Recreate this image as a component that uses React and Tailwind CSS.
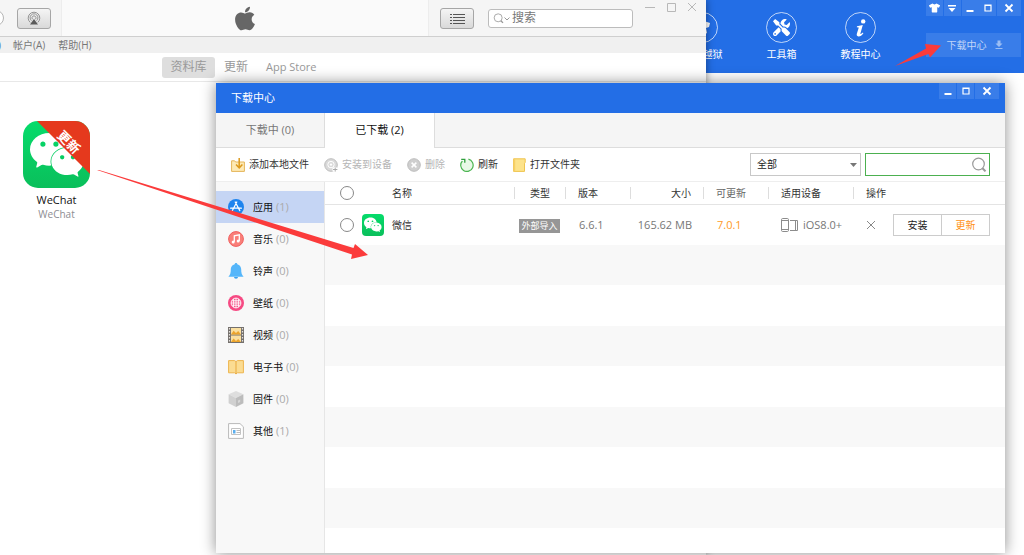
import React from 'react';
import { FaApple, FaTools, FaTshirt } from 'react-icons/fa';
import { MdDownload } from 'react-icons/md';
import { SiWechat } from 'react-icons/si';

const MinimizeIcon = () => (
  <svg width="10" height="10" viewBox="0 0 10 10" aria-hidden="true">
    <path d="M1.5 8h7" stroke="currentColor" strokeWidth="2" />
  </svg>
);

const MaximizeIcon = () => (
  <svg width="10" height="10" viewBox="0 0 10 10" fill="none" aria-hidden="true">
    <path d="M2 2h6v6H2zM2 2.5h6" stroke="currentColor" strokeWidth="1.2" />
  </svg>
);

const CloseIcon = () => (
  <svg width="10" height="10" viewBox="0 0 10 10" fill="none" aria-hidden="true">
    <path d="M1.5 1.5l7 7M8.5 1.5l-7 7" stroke="currentColor" strokeWidth="1.8" />
  </svg>
);

const MenuDownIcon = () => (
  <svg width="10" height="10" viewBox="0 0 10 10" aria-hidden="true">
    <path d="M1 2h8v1.4H1zM1.5 5h7L5 9z" fill="currentColor" />
  </svg>
);

const MagnifierIcon = ({ className }) => (
  <svg className={className} viewBox="0 0 16 16" fill="none" stroke="currentColor" aria-hidden="true">
    <circle cx="7.5" cy="7" r="5.8" strokeWidth="1.2" />
    <path d="M11.5 11.2l3 3.2" strokeWidth="2" />
  </svg>
);

// Small square button in the blue title bars
const WindowButton = ({ label, wide, children }) => (
  <button
    type="button"
    aria-label={label}
    className={`flex h-4 items-center justify-center bg-white/10 text-white ${wide ? 'w-6' : 'w-[17px]'}`}
  >
    {children}
  </button>
);

const AirplayIcon = () => (
  <svg width="14" height="14" viewBox="0 0 14 14" fill="none" aria-hidden="true">
    <g stroke="#8a8a8a" strokeWidth="0.9">
      <path d="M3.2 11.4a5.8 5.8 0 1 1 7.6 0" />
      <path d="M4.4 9.6a3.9 3.9 0 1 1 5.2 0" />
      <path d="M5.5 8.2a2 2 0 1 1 3 0" />
    </g>
    <path d="M7 8l4 5.5H3z" fill="#5a5a5a" />
  </svg>
);

const ListIcon = () => (
  <svg width="15" height="11" viewBox="0 0 15 11" aria-hidden="true">
    <path
      d="M0 1h2v1H0zM3 1h12v1H3zM0 4h2v1H0zM3 4h12v1H3zM0 7h2v1H0zM3 7h12v1H3zM0 10h2v1H0zM3 10h12v1H3z"
      fill="#555"
    />
  </svg>
);

/* Toolbar icons */

const ImportIcon = () => (
  <svg width="14" height="14" viewBox="0 0 14 14" fill="none" aria-hidden="true">
    <path d="M.6 2.8h3l1 1.2h8.8v9.4H.6z" fill="#fdeab6" stroke="#e5b559" />
    <path d="M8.2 0v9M5 6.4l3.2 3.4 3.2-3.4" stroke="#dd9a1d" strokeWidth="1.5" />
  </svg>
);

const InstallIcon = () => (
  <svg width="14" height="14" viewBox="0 0 14 14" fill="none" aria-hidden="true">
    <circle cx="7" cy="7" r="6.3" fill="#d9d9d9" stroke="#bdbdbd" />
    <circle cx="7" cy="6.6" r="3.2" stroke="#fff" />
    <circle cx="7" cy="6.6" r="1.2" fill="#fff" />
    <path d="M8.5 11.5h5M11 9v5" stroke="#fff" strokeWidth="3" />
    <path d="M9 11.5h4.4M11.2 9.4v4.2" stroke="#aaa" />
  </svg>
);

const DeleteIcon = () => (
  <svg width="14" height="14" viewBox="0 0 14 14" fill="none" aria-hidden="true">
    <circle cx="7" cy="7" r="6.3" fill="#cfcfcf" stroke="#bdbdbd" />
    <path d="M4.6 4.6l4.8 4.8M9.4 4.6L4.6 9.4" stroke="#fff" strokeWidth="1.5" />
  </svg>
);

const RefreshIcon = () => (
  <svg width="14" height="14" viewBox="0 0 14 14" fill="none" aria-hidden="true">
    <circle cx="7" cy="7.4" r="6" fill="#e9f9e7" />
    <path d="M8.4 1.2A6.2 6.2 0 1 1 2.4 3" stroke="#4cb552" strokeWidth="1.2" />
    <path d="M1.2 1.4h3.6v3.4" stroke="#2f9e3c" strokeWidth="1.3" />
  </svg>
);

const FolderIcon = () => (
  <svg width="13" height="14" viewBox="0 0 13 14" aria-hidden="true">
    <path d="M.6.8h11.6v3.6l-.7.8v8.2H.6z" fill="#fde38b" stroke="#efc44f" />
    <path d="M.6.8h1.6v12.6H.6z" fill="#f7d066" />
  </svg>
);

/* Sidebar icons */

const AppsIcon = () => (
  <svg width="16" height="16" viewBox="0 0 16 16" fill="none" aria-hidden="true">
    <circle cx="8" cy="8" r="8" fill="#1d84ee" />
    <path d="M8.8 3L4.4 11.6M7.2 3l4.6 8.6M2.6 9.2h10.8" stroke="#fff" strokeWidth="1.2" strokeLinecap="round" />
  </svg>
);

const MusicIcon = () => (
  <svg width="16" height="16" viewBox="0 0 16 16" fill="none" aria-hidden="true">
    <circle cx="8" cy="8" r="7.4" fill="#f97f79" stroke="#f0605f" />
    <path d="M6.3 10.8V4.9l5-1v6" stroke="#fff" strokeWidth="1.3" />
    <circle cx="5.2" cy="10.9" r="1.5" fill="#fff" />
    <circle cx="10.2" cy="10" r="1.5" fill="#fff" />
  </svg>
);

const BellIcon = () => (
  <svg width="16" height="16" viewBox="0 0 16 16" aria-hidden="true">
    <circle cx="8" cy="1.4" r="1.3" fill="#4fb0f6" />
    <path d="M8 1.2c-3.2 0-5.2 2.2-5.2 5.4 0 3.4-.6 5.4-2.4 7.2h15.2c-1.8-1.8-2.4-3.8-2.4-7.2 0-3.2-2-5.400-5.200-5.400z" fill="#55b6fa" />
    <path d="M6 14h4a2 1.8 0 0 1-4 0z" fill="#3aa0ee" />
  </svg>
);

const WallpaperIcon = () => (
  <svg width="16" height="16" viewBox="0 0 16 16" fill="none" aria-hidden="true">
    <circle cx="8" cy="8" r="8" fill="#f64a83" />
    <g stroke="#fff" strokeWidth="0.9">
      <circle cx="8" cy="8" r="4.9" />
      <path d="M8 3v10M3 8h10M5.6 4v8M10.4 4v8M4 5.8h8M4 10.2h8" />
    </g>
  </svg>
);

const VideoIcon = () => (
  <svg width="16" height="16" viewBox="0 0 16 16" aria-hidden="true">
    <path d="M0 0h16v16H0z" fill="#74706c" />
    <path d="M3 1h10v6.4H3zM3 8.6h10V15H3z" fill="#fbe0a0" />
    <path d="M3 7.400l2.600-3.600L8 6l2.200-2L13 7.400zM3 15l2.600-3.600L8 14l2.200-2 2.800 3z" fill="#eda52c" />
    <path d="M1.5 1v15M14.5 1v15" stroke="#e5e2de" strokeWidth="1.2" strokeDasharray="1.5 1.5" />
  </svg>
);

const BookIcon = () => (
  <svg width="16" height="16" viewBox="0 0 16 16" aria-hidden="true">
    <path d="M.6 1.6h6L8 2.6l1.4-1h6v12.2h-6L8 15l-1.4-1.2h-6z" fill="#fbdc92" stroke="#edb44d" />
    <path d="M8 2.6V15" stroke="#e8a93f" />
  </svg>
);

const FirmwareIcon = () => (
  <svg width="16" height="16" viewBox="0 0 16 16" aria-hidden="true">
    <path d="M8 0l7.4 3.2L8 7 .6 3.2z" fill="#dedede" />
    <path d="M.6 3.2L8 7v9L.6 12.2z" fill="#d0d0d0" />
    <path d="M15.4 3.2L8 7v9l7.4-3.8z" fill="#bcbcbc" />
    <path d="M10 9.6l2.2-1.1v2.4L10 12z" fill="#d6d6d6" />
  </svg>
);

const OtherIcon = () => (
  <svg width="16" height="16" viewBox="0 0 16 16" aria-hidden="true">
    <path d="M.6.6H12l3.4 3.2v11.600H.6z" fill="#fff" stroke="#b9b9b9" />
    <path d="M3.500 5.500h9v6h-9z" fill="#fff" stroke="#c2c2c2" />
    <path d="M5 7h2.500v3.500H5z" fill="#5aaeee" />
    <path d="M8.500 7.500H12M8.500 9.500H12" stroke="#bbb" />
  </svg>
);

const DevicesIcon = () => (
  <svg width="17" height="14" viewBox="0 0 17 14" fill="none" stroke="#8c8c8c" aria-hidden="true">
    <rect x=".5" y=".5" width="7" height="13" rx="1.2" />
    <path d="M.5 2.5h7M.5 11.500h7M9 2.500h7.500v10H9M14.500 2.500v10" />
  </svg>
);

const categories = [
  { name: '应用', count: 1, icon: AppsIcon, active: true },
  { name: '音乐', count: 0, icon: MusicIcon },
  { name: '铃声', count: 0, icon: BellIcon },
  { name: '壁纸', count: 0, icon: WallpaperIcon },
  { name: '视频', count: 0, icon: VideoIcon },
  { name: '电子书', count: 0, icon: BookIcon },
  { name: '固件', count: 0, icon: FirmwareIcon },
  { name: '其他', count: 1, icon: OtherIcon },
];

const tools = [
  { name: '添加本地文件', icon: ImportIcon },
  { name: '安装到设备', icon: InstallIcon, disabled: true },
  { name: '删除', icon: DeleteIcon, disabled: true },
  { name: '刷新', icon: RefreshIcon },
  { name: '打开文件夹', icon: FolderIcon },
];

const WeChatLogo = ({ className }) => (
  <span className={`flex items-center justify-center bg-linear-to-b from-[#05dc6b] to-[#0abf5b] text-white ${className}`}>
    <SiWechat className="h-4/5 w-4/5" />
  </span>
);

const HeaderItem = ({ label, children }) => (
  <a href="#" className="flex w-[79px] flex-col items-center text-[10px] leading-4 text-white">
    <span className="mb-[3px] flex h-[31px] w-[31px] items-center justify-center rounded-full border border-white/70">
      {children}
    </span>
    {label}
  </a>
);

// Main assistant window, behind everything else
const AssistantHeader = () => (
  <header className="flex h-[73px] justify-end bg-[#236ee6] pr-[3px]">
    <nav className="flex pt-3">
      <HeaderItem label="一键越狱">
        <svg width="18" height="18" viewBox="0 0 18 18" fill="#fff" aria-hidden="true">
          <path d="M2 5l8-3 6 2-1 4-3 1 1 5-5 3-5-2 1-4z" />
        </svg>
      </HeaderItem>
      <HeaderItem label="工具箱">
        <FaTools className="h-[17px] w-[17px]" />
      </HeaderItem>
      <HeaderItem label="教程中心">
        <svg width="18" height="20" viewBox="0 0 18 20" fill="#fff" aria-hidden="true">
          <circle cx="11.2" cy="3.4" r="2.2" />
          <path d="M5 8.2l5.8-1.2-2.4 8.4c-.2.9.6.9 2.4-.8l.6.6c-1.8 2.6-3.4 3.4-5 3.2-1.6-.1-2-1.2-1.5-2.8L6.8 9.400l-2-.2z" />
        </svg>
      </HeaderItem>
    </nav>
    <div className="ml-[26px] flex w-[95px] flex-col justify-between pb-4">
      <div className="flex justify-between">
        <WindowButton label="皮肤"><FaTshirt className="h-[10px] w-[11px]" /></WindowButton>
        <WindowButton label="菜单"><MenuDownIcon /></WindowButton>
        <WindowButton label="最小化"><MinimizeIcon /></WindowButton>
        <WindowButton label="最大化"><MaximizeIcon /></WindowButton>
        <WindowButton label="关闭" wide><CloseIcon /></WindowButton>
      </div>
      <button type="button" className="flex h-6 items-center justify-center gap-[6px] bg-white/10 pl-1 text-[10px] text-white/70">
        下载中心
        <MdDownload className="h-3 w-3 text-white/50" />
      </button>
    </div>
  </header>
);

const ItunesWindow = () => (
  <section className="absolute inset-y-0 left-0 right-[318px] bg-white shadow-[0_0_8px_rgba(0,0,0,0.45)]">
    <div className="flex h-[37px] border-b border-[#cfcfcf] bg-[#f5f5f5]">
      <div className="flex w-[61px] items-center">
        <span className="-ml-3 mr-[13px] h-4 w-4 rounded-full border border-[#b5b5b5] bg-white" />
        <button
          type="button"
          aria-label="AirPlay"
          className="flex h-[21px] w-[34px] items-center justify-center rounded-[3px] border border-[#a6a6a6] bg-linear-to-b from-[#f5f5f5] to-[#d9d9d9]"
        >
          <AirplayIcon />
        </button>
      </div>
      <div className="flex flex-1 items-center justify-center border-x border-[#ededed] bg-[#fafafa]">
        <FaApple className="h-[27px] w-[26px] text-[#666]" />
      </div>
      <div className="flex w-[277px] items-center pl-[11px] pr-[9px]">
        <button
          type="button"
          aria-label="列表"
          className="flex h-[21px] w-[34px] items-center justify-center rounded-[3px] border border-[#a6a6a6] bg-linear-to-b from-[#f5f5f5] to-[#d9d9d9]"
        >
          <ListIcon />
        </button>
        <label className="ml-[14px] flex h-[19px] w-[145px] items-center rounded-[3px] border border-[#bcbcbc] bg-white pl-1 text-[#999]">
          <MagnifierIcon className="h-[11px] w-[11px]" />
          <svg width="6" height="5" viewBox="0 0 6 5" fill="none" stroke="currentColor" aria-hidden="true">
            <path d="M.5 1.5L3 4l2.500-2.500" />
          </svg>
          <input
            type="text"
            aria-label="搜索"
            placeholder="搜索"
            className="ml-[2px] min-w-0 flex-1 bg-transparent text-[12px] leading-4 placeholder:text-[#777] focus:outline-none"
          />
        </label>
        <div className="ml-auto flex gap-[11px] self-start pt-[2px] text-[#b8b8b8]">
          <button type="button" aria-label="最小化">
            <svg width="10" height="10" viewBox="0 0 10 10" stroke="currentColor" aria-hidden="true"><path d="M0 5.5h10" /></svg>
          </button>
          <button type="button" aria-label="最大化">
            <svg width="10" height="10" viewBox="0 0 10 10" fill="none" stroke="currentColor" aria-hidden="true"><path d="M1.5 1.5h8v8h-8z" /></svg>
          </button>
          <button type="button" aria-label="关闭">
            <svg width="10" height="10" viewBox="0 0 10 10" stroke="currentColor" aria-hidden="true"><path d="M1 1l8 8M9 1L1 9" /></svg>
          </button>
        </div>
      </div>
    </div>

    {/* Menu bar */}
    <div className="flex h-4 items-center gap-[13px] bg-[#f0f0f0] text-[10px] leading-4 text-[#777]">
      <span className="-ml-[2px] w-[2px] text-[#4b7fc0]">)</span>
      <button type="button">帐户(A)</button>
      <button type="button">帮助(H)</button>
    </div>

    <nav className="flex h-[29px] items-center border-b border-[#e8e8e8] pl-[162px] text-[12px] text-[#999]">
      <a href="#" className="flex h-[21px] w-[53px] items-center justify-center rounded-[3px] bg-[#dedede]">资料库</a>
      <a href="#" className="ml-[9px]">更新</a>
      <a href="#" className="ml-[18px] text-[11px] font-medium">App Store</a>
    </nav>

    <div className="ml-[23px] mt-[39px] w-[67px] text-center text-[11px] leading-[15px]">
      <div className="relative overflow-hidden rounded-[15px]">
        <WeChatLogo className="h-[67px] w-[67px]" />
        <svg className="absolute inset-0" width="67" height="67" viewBox="0 0 67 67" aria-hidden="true">
          <path d="M14 0h53v53z" fill="#e5391d" />
        </svg>
        <span className="absolute left-8 top-[13px] w-7 rotate-45 text-[13px] font-bold leading-4 text-white">更新</span>
      </div>
      <p className="mt-1 font-medium text-[#111]">WeChat</p>
      <p className="text-[10px] text-[#8d8d92]">WeChat</p>
    </div>
  </section>
);

const Th = ({ children, className = '' }) => (
  <th scope="col" className="p-0 font-normal">
    <div className={`h-3 border-l border-[#ddd] px-3 leading-3 ${className}`}>{children}</div>
  </th>
);

const CircleCheck = ({ label }) => (
  <input
    type="checkbox"
    aria-label={label}
    className="block h-[14px] w-[14px] shrink-0 appearance-none rounded-full border border-[#888] bg-white"
  />
);

const FileTable = () => (
  <table className="w-full table-fixed border-separate border-spacing-0 text-left text-[10px] text-[#333]">
    <colgroup>
      <col />
      <col className="w-[51px]" />
      <col className="w-[65px]" />
      <col className="w-[73px]" />
      <col className="w-[65px]" />
      <col className="w-[85px]" />
      <col className="w-[152px]" />
    </colgroup>
    <thead>
      <tr className="h-[22px]">
        <th scope="col" className="p-0 font-normal">
          <div className="flex items-center pl-[15px]">
            <CircleCheck label="全选" />
            <span className="ml-[38px]">名称</span>
          </div>
        </th>
        <Th className="text-center">类型</Th>
        <Th>版本</Th>
        <Th className="text-right">大小</Th>
        <Th className="text-[#666]">可更新</Th>
        <Th>适用设备</Th>
        <Th>操作</Th>
      </tr>
    </thead>
    <tbody>
      <tr className="h-[41px] text-[#777]">
        <td className="border-t border-[#e4e4e4] p-0">
          <div className="flex items-center pl-[15px] text-[#333]">
            <CircleCheck label="微信" />
            <WeChatLogo className="mx-2 h-[22px] w-[22px] rounded" />
            微信
          </div>
        </td>
        <td className="border-t border-[#e4e4e4] p-0 text-center">
          <span className="inline-block h-[14px] w-[41px] bg-[#969696] align-middle text-[9px] leading-[14px] text-white">外部导入</span>
        </td>
        <td className="border-t border-[#e4e4e4] p-0 pl-[14px] text-[11px]">6.6.1</td>
        <td className="border-t border-[#e4e4e4] p-0 pr-[11px] text-right text-[11px]">165.62 MB</td>
        <td className="border-t border-[#e4e4e4] p-0 pl-[14px] text-[11px] text-[#ff9a26]">7.0.1</td>
        <td className="border-t border-[#e4e4e4] p-0 pl-[13px] text-[11px]">
          <div className="flex items-center gap-[5px]">
            <DevicesIcon />
            iOS8.0+
          </div>
        </td>
        <td className="border-t border-[#e4e4e4] p-0 pl-[13px] pr-[15px]">
          <div className="flex items-center justify-between">
            <button type="button" aria-label="删除">
              <svg width="10" height="10" viewBox="0 0 10 10" stroke="#888" aria-hidden="true"><path d="M1 1l8 8M9 1L1 9" /></svg>
            </button>
            <div className="flex h-[22px] w-[97px] border border-[#ccc] text-[#222]">
              <button type="button" className="flex-1 border-r border-[#ccc]">安装</button>
              <button type="button" className="flex-1 text-[#ff9012]">更新</button>
            </div>
          </div>
        </td>
      </tr>
    </tbody>
  </table>
);

const DownloadWindow = () => (
  <section className="absolute bottom-[2px] left-[216px] right-[19px] top-[83px] flex flex-col bg-white shadow-[0_0_14px_rgba(0,0,0,0.45)]">
    <div className="flex h-[30px] items-center justify-between bg-[#236ee6] pl-[15px] pr-[6px] text-[11px] text-white">
      <h1>下载中心</h1>
      <div className="flex gap-px self-start">
        <WindowButton label="最小化"><MinimizeIcon /></WindowButton>
        <WindowButton label="最大化"><MaximizeIcon /></WindowButton>
        <WindowButton label="关闭" wide><CloseIcon /></WindowButton>
      </div>
    </div>

    {/* Tabs */}
    <div className="flex h-[35px] bg-[#f5f5f5] text-[11px]">
      <button type="button" className="w-[109px] border-b border-r border-[#ddd] text-[#777]">下载中 (0)</button>
      <button type="button" className="w-[110px] border-r border-[#ddd] bg-white text-[#111]">已下载 (2)</button>
      <div className="flex-1 border-b border-[#ddd]" />
    </div>

    <div className="flex h-[34px] items-center gap-[15px] border-b border-[#eee] px-[15px] text-[10px] text-[#333]">
      {tools.map(({ name, icon: Icon, disabled }) => (
        <button
          key={name}
          type="button"
          disabled={disabled}
          className={`flex items-center gap-[4px] ${disabled ? 'text-[#b5b5b5]' : ''}`}
        >
          <Icon />
          {name}
        </button>
      ))}
      <div className="ml-auto flex gap-1">
        <div className="relative">
          <select aria-label="类型" className="block h-[23px] w-[111px] appearance-none border border-[#c8c8c8] bg-white pl-[6px] text-[10px] text-[#222]">
            <option>全部</option>
          </select>
          <svg className="pointer-events-none absolute right-1 top-[10px]" width="7" height="4" viewBox="0 0 7 4" aria-hidden="true">
            <path d="M0 0h7L3.5 4z" fill="#777" />
          </svg>
        </div>
        <label className="flex h-[23px] w-[125px] items-center border border-[#4cb050] bg-white pr-[2px] text-[#999]">
          <input type="text" aria-label="搜索文件" className="min-w-0 flex-1 bg-transparent px-1 focus:outline-none" />
          <MagnifierIcon className="h-4 w-4" />
        </label>
      </div>
    </div>

    <div className="flex min-h-0 flex-1">
      <nav className="w-[109px] border-r border-[#e6e6e6] bg-[#f8f8f8] pt-[9px]">
        {categories.map(({ name, count, icon: Icon, active }) => (
          <a
            key={name}
            href="#"
            className={`flex h-8 items-center pl-3 text-[10px] text-[#111] ${active ? 'bg-[#c5d5f4]' : ''}`}
          >
            <Icon />
            <span className="ml-[9px]">{name}</span>
            <span className="ml-[3px] text-[11px] text-[#aaa]">({count})</span>
          </a>
        ))}
      </nav>
      <div className="min-w-0 flex-1 overflow-hidden">
        <FileTable />
        {/* Empty striped rows below the list */}
        {[0, 1, 2, 3].map((n) => (
          <div key={n}>
            <div className="h-10 bg-[#f8f8f8]" />
            <div className="h-[41px]" />
          </div>
        ))}
      </div>
    </div>
  </section>
);

// Red pointers drawn over the windows
const Arrows = () => (
  <>
    <svg className="pointer-events-none absolute left-[96px] top-[168px]" width="274" height="94" viewBox="0 0 274 94" fill="#fb3b3b" aria-hidden="true">
      <path d="M1 2L3 2 257.500 80 259 76 272 87 255 91 256 86.500z" />
    </svg>
    <svg className="pointer-events-none absolute left-[894px] top-[42px]" width="50" height="28" viewBox="0 0 50 28" fill="#fb3b3b" aria-hidden="true">
      <path d="M1 24L32 6.500 31 2l16 1.500L36 15.500 34.500 12z" />
    </svg>
  </>
);

const App = () => (
  <main className="relative min-h-screen overflow-hidden bg-white font-['Open_Sans','Noto_Sans_CJK_SC',sans-serif]">
    <AssistantHeader />
    <ItunesWindow />
    <DownloadWindow />
    <Arrows />
  </main>
);

export default App;
